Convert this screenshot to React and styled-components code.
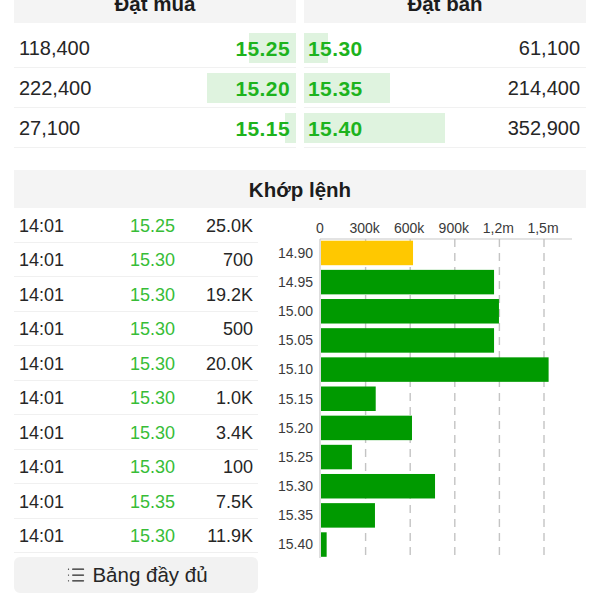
import React from "react";
import styled, { createGlobalStyle } from "styled-components";
import { List } from "lucide-react";

const GlobalStyle = createGlobalStyle`
  html, body { margin: 0; padding: 0; background: #ffffff; }
  body {
    font-family: "Liberation Sans", Arial, Helvetica, sans-serif;
    color: #222222;
    overflow: hidden;
  }
  * { box-sizing: border-box; }
`;

const Page = styled.div`
  width: 600px;
  padding: 0 14px;
  margin-top: -15px;
`;

const BookGrid = styled.div`
  display: grid;
  grid-template-columns: 1fr 1fr;
  column-gap: 8px;
`;

const SectionHeader = styled.div`
  height: 38px;
  background: #f4f4f4;
  display: flex;
  align-items: center;
  justify-content: center;
  padding-top: ${(p) => (p.$tight ? "1px" : "0")};
  font-size: 20.5px;
  font-weight: 700;
  color: #1c1c1c;
`;

const BookRows = styled.div`
  margin-top: 5px;
`;

const BookRow = styled.div`
  position: relative;
  height: 40px;
  display: flex;
  align-items: center;
  justify-content: space-between;
  padding: ${(p) => (p.$side === "buy" ? "2px 6px 0 5px" : "2px 6px 0 4px")};
  border-bottom: 1px solid #f1f1f1;
`;

const Depth = styled.div`
  position: absolute;
  top: 5px;
  height: 30px;
  background: #dff3df;
  ${(p) => (p.$side === "buy" ? "right: 0;" : "left: 0;")}
`;

const BookVolume = styled.span`
  position: relative;
  font-size: 20px;
  color: #262626;
`;

const BookPrice = styled.span`
  position: relative;
  font-size: 21px;
  font-weight: 700;
  color: #1db31d;
  letter-spacing: 0.4px;
`;

const MatchSection = styled.div`
  margin-top: 22px;
`;

const MatchBody = styled.div`
  display: grid;
  grid-template-columns: 244px 1fr;
`;

const TradeColumn = styled.div`
  display: flex;
  flex-direction: column;
`;

const TradeRow = styled.div`
  height: 34.5px;
  display: grid;
  grid-template-columns: 1fr 80px 78px;
  align-items: center;
  padding: 3px 5px 0;
  border-bottom: 1px solid #f0f0f0;
  font-size: 18px;
`;

const TradeTime = styled.span`
  color: #262626;
`;

const TradePrice = styled.span`
  color: #37bd37;
  text-align: right;
`;

const TradeVolume = styled.span`
  color: #262626;
  text-align: right;
`;

const FullButton = styled.button`
  margin-top: 4px;
  height: 36px;
  border: none;
  border-radius: 6px;
  background: #f2f2f2;
  display: flex;
  align-items: center;
  justify-content: center;
  gap: 6px;
  font-family: "Liberation Sans", Arial, sans-serif;
  font-size: 20.5px;
  color: #262626;
  padding: 0 0 0 2px;
`;

const ChartBox = styled.div`
  height: 385px;
`;

const buys = [
  { vol: "118,400", n: 118400, price: "15.25" },
  { vol: "222,400", n: 222400, price: "15.20" },
  { vol: "27,100", n: 27100, price: "15.15" },
];
const sells = [
  { vol: "61,100", n: 61100, price: "15.30" },
  { vol: "214,400", n: 214400, price: "15.35" },
  { vol: "352,900", n: 352900, price: "15.40" },
];
const maxVol = 352900;

const trades = [
  ["14:01", "15.25", "25.0K"],
  ["14:01", "15.30", "700"],
  ["14:01", "15.30", "19.2K"],
  ["14:01", "15.30", "500"],
  ["14:01", "15.30", "20.0K"],
  ["14:01", "15.30", "1.0K"],
  ["14:01", "15.30", "3.4K"],
  ["14:01", "15.30", "100"],
  ["14:01", "15.35", "7.5K"],
  ["14:01", "15.30", "11.9K"],
];

const bars = [
  ["14.90", 619000, "#ffc800"],
  ["14.95", 1164000],
  ["15.00", 1197000],
  ["15.05", 1164000],
  ["15.10", 1531000],
  ["15.15", 368000],
  ["15.20", 612000],
  ["15.25", 208000],
  ["15.30", 767000],
  ["15.35", 363000],
  ["15.40", 38000],
];

const X0 = 63;
const PER = 44.6 / 300000;
const ticks = ["0", "300k", "600k", "900k", "1,2m", "1,5m"];

function VolumeChart() {
  return (
    <svg width="328" height="385" viewBox="0 0 328 385">
      {ticks.map((t, i) => (
        <text
          key={t}
          x={X0 - 1 + i * 44.6}
          y={25}
          textAnchor="middle"
          fontSize="14"
          fill="#3a3a3a"
          fontFamily="Liberation Sans, Arial, sans-serif"
        >
          {t}
        </text>
      ))}
      <line x1={X0 - 1} y1={31} x2={314} y2={31} stroke="#c8c8c8" strokeWidth="1.2" />
      <line x1={X0 - 1} y1={31} x2={X0 - 1} y2={350} stroke="#c8c8c8" strokeWidth="1.2" />
      {ticks.slice(1).map((t, i) => (
        <line
          key={t}
          x1={X0 + (i + 1) * 44.6}
          y1={31}
          x2={X0 + (i + 1) * 44.6}
          y2={350}
          stroke="#c4c4c4"
          strokeWidth="1.4"
          strokeDasharray="8 6"
        />
      ))}
      {bars.map(([label, v, color], i) => {
        const y = 32.7 + i * 29.16;
        return (
          <g key={label}>
            <rect x={X0} y={y} width={v * PER} height={24.5} fill={color || "#009a00"} />
            <text
              x={55}
              y={y + 17}
              textAnchor="end"
              fontSize="14"
              fill="#3a3a3a"
              fontFamily="Liberation Sans, Arial, sans-serif"
            >
              {label}
            </text>
          </g>
        );
      })}
    </svg>
  );
}

export default function App() {
  return (
    <Page>
      <GlobalStyle />
      <BookGrid>
        <div>
          <SectionHeader>Đặt mua</SectionHeader>
          <BookRows>
            {buys.map((b) => (
              <BookRow key={b.price} $side="buy">
                <Depth $side="buy" style={{ width: `${(b.n / maxVol) * 50}%` }} />
                <BookVolume>{b.vol}</BookVolume>
                <BookPrice>{b.price}</BookPrice>
              </BookRow>
            ))}
          </BookRows>
        </div>
        <div>
          <SectionHeader>Đặt bán</SectionHeader>
          <BookRows>
            {sells.map((s) => (
              <BookRow key={s.price} $side="sell">
                <Depth $side="sell" style={{ width: `${(s.n / maxVol) * 50}%` }} />
                <BookPrice>{s.price}</BookPrice>
                <BookVolume>{s.vol}</BookVolume>
              </BookRow>
            ))}
          </BookRows>
        </div>
      </BookGrid>
      <MatchSection>
        <SectionHeader $tight>Khớp lệnh</SectionHeader>
        <MatchBody>
          <TradeColumn>
            {trades.map((t, i) => (
              <TradeRow key={i}>
                <TradeTime>{t[0]}</TradeTime>
                <TradePrice>{t[1]}</TradePrice>
                <TradeVolume>{t[2]}</TradeVolume>
              </TradeRow>
            ))}
            <FullButton>
              <List size={20} strokeWidth={1.5} />
              Bảng đầy đủ
            </FullButton>
          </TradeColumn>
          <ChartBox>
            <VolumeChart />
          </ChartBox>
        </MatchBody>
      </MatchSection>
    </Page>
  );
}
